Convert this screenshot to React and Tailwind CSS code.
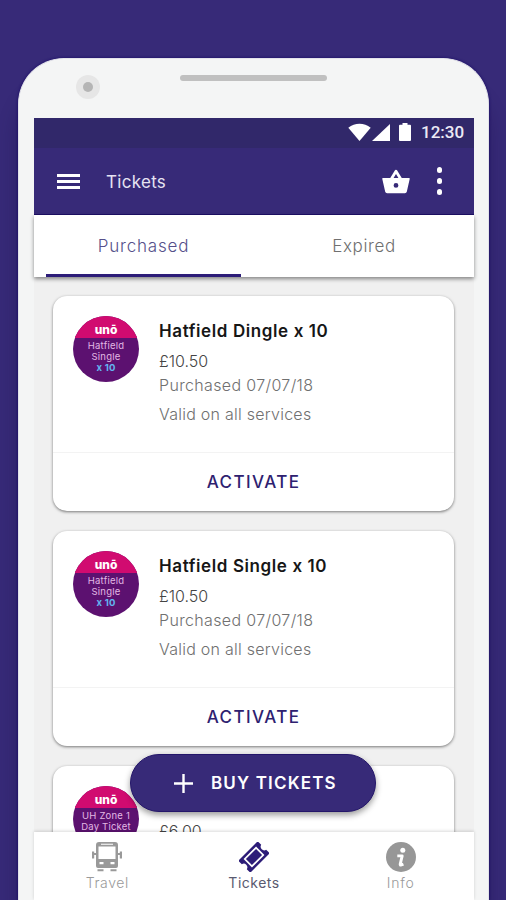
const tickets = [
  {
    id: 1,
    title: "Hatfield Dingle x 10",
    price: "£10.50",
    purchased: "Purchased 07/07/18",
    valid: "Valid on all services",
    badge: ["Hatfield", "Single"],
    extra: "x 10",
    active: true,
  },
  {
    id: 2,
    title: "Hatfield Single x 10",
    price: "£10.50",
    purchased: "Purchased 07/07/18",
    valid: "Valid on all services",
    badge: ["Hatfield", "Single"],
    extra: "x 10",
    active: true,
  },
  {
    id: 3,
    title: "",
    price: "£6.00",
    purchased: "",
    valid: "",
    badge: ["UH Zone 1", "Day Ticket"],
    extra: "",
    active: false,
  },
];

function StatusBar() {
  return (
    <div className="h-[30px] shrink-0 bg-[#31286a] flex justify-end pr-[9px] text-white">
      <svg className="w-[23px] h-[18px] mt-[5px]" viewBox="0 0 23 18" fill="currentColor">
        <path d="M0.3 4.8C6.8-.6 16.2-.6 22.7 4.8L11.5 18z" />
      </svg>
      <svg className="w-[18px] h-[17px] mt-[6px] ml-[1px]" viewBox="0 0 18 17" fill="currentColor">
        <path d="M18 0v17H0z" />
      </svg>
      <svg className="w-[12px] h-[18px] mt-[5px] ml-[9px]" viewBox="0 0 12 18" fill="currentColor">
        <path d="M3.5 0h5v1.8H11a1 1 0 0 1 1 1V17a1 1 0 0 1-1 1H1a1 1 0 0 1-1-1V2.8a1 1 0 0 1 1-1h2.500z" />
      </svg>
      <span className="ml-[10px] mt-[3px] w-[44px] whitespace-nowrap font-[Roboto] text-[17px] leading-[22px] font-medium text-[#eceaf5]">
        12:30
      </span>
    </div>
  );
}

function AppBar() {
  return (
    <div className="h-[67px] shrink-0 bg-[#372a78] border-b border-[#1d0f66] flex items-center pl-[23px] text-white">
      <button className="flex flex-col gap-[3px]">
        <span className="block w-[23px] h-[3px] bg-white" />
        <span className="block w-[23px] h-[3px] bg-white" />
        <span className="block w-[23px] h-[3px] bg-white" />
      </button>
      <span className="ml-[26px] pt-[3px] text-[17px] tracking-[0.3px] text-[#e6e3f2]">Tickets</span>
      <svg className="ml-auto w-[28px] h-[25px]" viewBox="0 0 28 25" fill="currentColor">
        <path d="M9.300 10L14 2.200l4.700 7.800" fill="none" stroke="currentColor" strokeWidth="2.800" strokeLinejoin="round" />
        <path
          fillRule="evenodd"
          d="M1 9h26a.7.7 0 0 1 .7.900L24.800 22.800a2 2 0 0 1-1.900 1.500H5.100A2 2 0 0 1 3.200 22.800L.3 9.900A.7.700 0 0 1 1 9zM14 14a2.400 2.400 0 1 0 0 4.800 2.400 2.400 0 0 0 0-4.800z"
        />
      </svg>
      <button className="flex flex-col gap-[5.500px] ml-[27px] mr-[32px]">
        <span className="block size-[5.500px] rounded-full bg-white" />
        <span className="block size-[5.500px] rounded-full bg-white" />
        <span className="block size-[5.500px] rounded-full bg-white" />
      </button>
    </div>
  );
}

function Tabs() {
  return (
    <div className="relative z-10 h-[62px] shrink-0 bg-white grid grid-cols-2 shadow-[0_2px_4px_rgba(0,0,0,0.45)] text-[17px] font-light">
      <button className="ml-3 mr-[13px] pt-[5px] border-b-[3px] border-[#2c1c78] text-[#55508a] tracking-[0.8px]">
        Purchased
      </button>
      <button className="text-[#707070] pt-[2px] tracking-[0.6px]">Expired</button>
    </div>
  );
}

function TicketBadge({ lines, extra }) {
  return (
    <div className="size-[66px] shrink-0 rounded-full overflow-hidden bg-[#5c1170] text-center text-[#e2b8e4]">
      <div className="h-[22px] bg-[#d10b70] text-white text-[12px] leading-[27px] font-extrabold">
        unō
      </div>
      <div className="pt-[2px] text-[9.500px] leading-[11px] tracking-[0.2px] whitespace-nowrap">
        {lines.map((line) => (
          <div key={line}>{line}</div>
        ))}
        {extra && <div className="font-bold text-[#62b5ef]">{extra}</div>}
      </div>
    </div>
  );
}

function TicketCard({ ticket }) {
  return (
    <div className="h-[215px] shrink-0 rounded-[14px] bg-white shadow-[0_1px_3px_rgba(0,0,0,0.5)] flex flex-col">
      <div className="h-[157px] flex pt-5 pl-5 border-b border-[#f3f3f3]">
        <TicketBadge lines={ticket.badge} extra={ticket.extra} />
        <div className="ml-5 whitespace-nowrap font-light text-[#707070]">
          <h2 className="mt-1 h-6 text-[17px] leading-[23px] font-semibold tracking-[0.6px] text-[#161616]">
            {ticket.title}
          </h2>
          <p className="mt-[5px] text-[16px] leading-6 text-[#444]">{ticket.price}</p>
          <p className="text-[16px] leading-[25px] tracking-[0.35px]">{ticket.purchased}</p>
          <p className="mt-1 text-[16px] leading-[25px] tracking-[0.25px]">{ticket.valid}</p>
        </div>
      </div>
      {ticket.active && (
        <button className="flex-1 pt-[2px] text-[17px] font-medium tracking-[1.400px] text-[#2e2170]">
          ACTIVATE
        </button>
      )}
    </div>
  );
}

function BusIcon() {
  return (
    <svg className="w-[30px] h-[30px]" viewBox="0 0 30 30" fill="#999">
      <path
        fillRule="evenodd"
        d="M7 0h16a3 3 0 0 1 3 3v21a2 2 0 0 1-2 2H6a2 2 0 0 1-2-2V3a3 3 0 0 1 3-3zM6.500 4.500v12.500h17v-12.500zM9 1.800v1h12v-1zM7.500 20v2.300h4v-2.300zM18.500 20v2.300h4v-2.300z"
      />
      <path d="M0 9.500h2.200v7H0zM2 11h2v2H2zM27.800 9.500H30v7h-2.200zM26 11h2v2h-2z" />
      <path d="M5.500 27.300h6v2H5.500zM18.500 27.300h6v2h-6z" />
    </svg>
  );
}

function TicketIcon() {
  return (
    <svg className="w-[30px] h-[30px]" viewBox="0 0 30 30">
      <g transform="rotate(-45 15 15)">
        <path
          d="M2.300 6.500h25.400a1 1 0 0 1 1 1v4a3.600 3.600 0 0 0 0 7v4a1 1 0 0 1-1 1H2.300a1 1 0 0 1-1-1v-4a3.600 3.600 0 0 0 0-7v-4a1 1 0 0 1 1-1z"
          fill="#2c1c78"
        />
        <path d="M7 9.900h16v10.200H7z" fill="none" stroke="#fff" strokeWidth="1.700" />
      </g>
    </svg>
  );
}

function InfoIcon() {
  return (
    <svg className="w-[30px] h-[30px]" viewBox="0 0 30 30">
      <circle cx="15" cy="15" r="15" fill="#979797" />
      <circle cx="16.800" cy="8.300" r="2.500" fill="#fff" />
      <path
        d="M11.300 13.900h4.900l-2 8.200q-.3 1.400 1.100.9l2.100-.9"
        fill="none"
        stroke="#fff"
        strokeWidth="2.900"
        strokeLinejoin="round"
      />
    </svg>
  );
}

function BottomNav() {
  return (
    <div className="relative z-10 h-[68px] shrink-0 bg-white shadow-[0_-1px_3px_rgba(0,0,0,0.15)] grid grid-cols-3 text-[14px] leading-5 font-light text-[#9a9a9a]">
      <div className="flex flex-col items-center pt-[10px]">
        <BusIcon />
        <span className="mt-[1px] tracking-[0.6px]">Travel</span>
      </div>
      <div className="flex flex-col items-center pt-[10px] text-[#5a5a70]">
        <TicketIcon />
        <span className="mt-[1px] font-normal tracking-[0.5px]">Tickets</span>
      </div>
      <div className="flex flex-col items-center pt-[10px]">
        <InfoIcon />
        <span className="mt-[1px] tracking-[0.8px]">Info</span>
      </div>
    </div>
  );
}

export default function App() {
  return (
    <div className="h-[900px] w-[506px] overflow-hidden bg-[#372a78] pt-[58px] pl-[18px] font-[Inter,sans-serif]">
      <div className="w-[471px] h-[842px] rounded-t-[46px] bg-[#f4f5f5] border-t border-x border-[#e3e3ea] shadow-[0_0_3px_#150763,0_30px_20px_rgba(20,10,60,0.3)] flex flex-col">
        <div className="h-[59px] shrink-0 flex">
          <div className="ml-[57px] mt-4 size-6 rounded-full bg-[#e6e6e6] flex items-center justify-center">
            <div className="size-[10px] rounded-full bg-[#b5b5b5]" />
          </div>
          <div className="ml-[80px] mt-4 w-[147px] h-[6px] rounded-full bg-[#c0c0c0]" />
        </div>
        <div className="relative ml-[15px] w-[440px] flex-1 min-h-0 bg-[#f0f0f0] flex flex-col">
          <StatusBar />
          <AppBar />
          <Tabs />
          <div className="flex-1 min-h-0 overflow-hidden flex flex-col gap-5 pt-[19px] pl-[19px] pr-5">
            {tickets.map((ticket) => (
              <TicketCard key={ticket.id} ticket={ticket} />
            ))}
          </div>
          <button className="absolute left-[96px] bottom-[88px] w-[246px] h-[58px] rounded-full bg-[#372a78] border border-[#24166a] shadow-[0_3px_6px_rgba(0,0,0,0.4)] flex items-center pl-[43px] text-white text-[17px] font-semibold tracking-[1.150px] whitespace-nowrap">
            <svg className="size-[19px] mr-[18px]" viewBox="0 0 19 19" stroke="currentColor" strokeWidth="2.400">
              <path d="M9.500 0v19M0 9.500h19" />
            </svg>
            <span className="pt-[2px]">BUY TICKETS</span>
          </button>
          <BottomNav />
        </div>
      </div>
    </div>
  );
}
